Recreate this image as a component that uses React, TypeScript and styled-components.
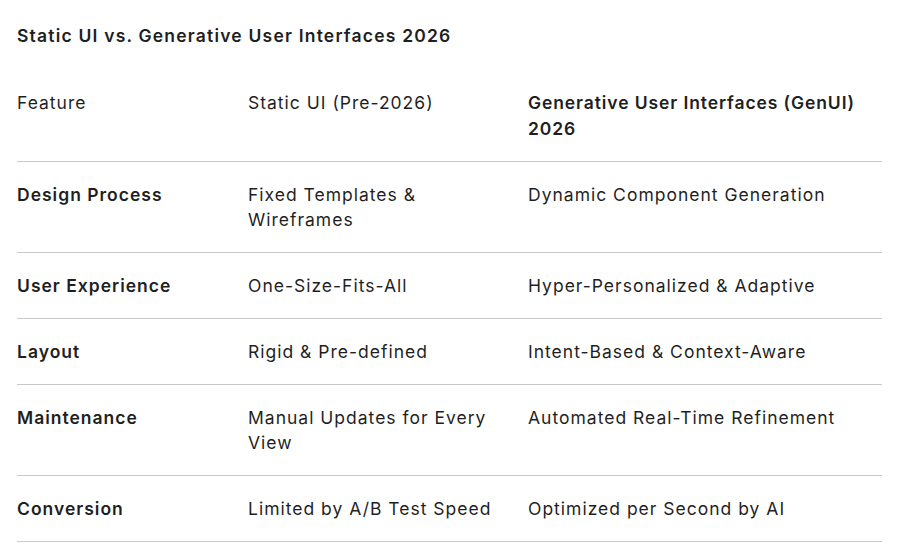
import styled, { createGlobalStyle } from 'styled-components';

const GlobalStyle = createGlobalStyle`
  html, body {
    margin: 0;
    padding: 0;
    background: #ffffff;
  }
  body {
    font-family: Inter, 'Noto Sans', sans-serif;
    color: #1f1f1f;
  }
`;

interface ComparisonRow {
  feature: string;
  staticUi: string;
  genUi: string;
}

const rows: ComparisonRow[] = [
  {
    feature: 'Design Process',
    staticUi: 'Fixed Templates & Wireframes',
    genUi: 'Dynamic Component Generation',
  },
  {
    feature: 'User Experience',
    staticUi: 'One-Size-Fits-All',
    genUi: 'Hyper-Personalized & Adaptive',
  },
  {
    feature: 'Layout',
    staticUi: 'Rigid & Pre-defined',
    genUi: 'Intent-Based & Context-Aware',
  },
  {
    feature: 'Maintenance',
    staticUi: 'Manual Updates for Every View',
    genUi: 'Automated Real-Time Refinement',
  },
  {
    feature: 'Conversion',
    staticUi: 'Limited by A/B Test Speed',
    genUi: 'Optimized per Second by AI',
  },
];

const Page = styled.div`
  padding: 24px 18px 16px 17px;
`;

const Title = styled.h2`
  margin: 0 0 22px;
  font-size: 17.5px;
  line-height: 24px;
  font-weight: 600;
  letter-spacing: 1.2px;
`;

const Table = styled.table`
  width: 865px;
  border-collapse: collapse;
  table-layout: fixed;
`;

const HeadCell = styled.th<{ strong?: boolean }>`
  text-align: left;
  vertical-align: top;
  padding: 20px 16px 19px 0;
  font-size: 17.5px;
  line-height: 26px;
  letter-spacing: ${(p) => (p.strong ? '0.9px' : '1px')};
  font-weight: ${(p) => (p.strong ? 600 : 400)};
  border-bottom: 1px solid #c9c9c9;
`;

const Cell = styled.td<{ strong?: boolean }>`
  vertical-align: top;
  padding: 20px 16px 20px 0;
  font-size: 17.5px;
  line-height: 25px;
  letter-spacing: 1px;
  font-weight: ${(p) => (p.strong ? 600 : 400)};
  border-bottom: 1px solid #c9c9c9;
`;

export default function App() {
  return (
    <Page>
      <GlobalStyle />
      <Title>Static UI vs. Generative User Interfaces 2026</Title>
      <Table>
        <colgroup>
          <col style={{ width: 231 }} />
          <col style={{ width: 280 }} />
          <col style={{ width: 354 }} />
        </colgroup>
        <thead>
          <tr>
            <HeadCell>Feature</HeadCell>
            <HeadCell>Static UI (Pre-2026)</HeadCell>
            <HeadCell strong>Generative User Interfaces (GenUI) 2026</HeadCell>
          </tr>
        </thead>
        <tbody>
          {rows.map((row) => (
            <tr key={row.feature}>
              <Cell strong>{row.feature}</Cell>
              <Cell>{row.staticUi}</Cell>
              <Cell>{row.genUi}</Cell>
            </tr>
          ))}
        </tbody>
      </Table>
    </Page>
  );
}
